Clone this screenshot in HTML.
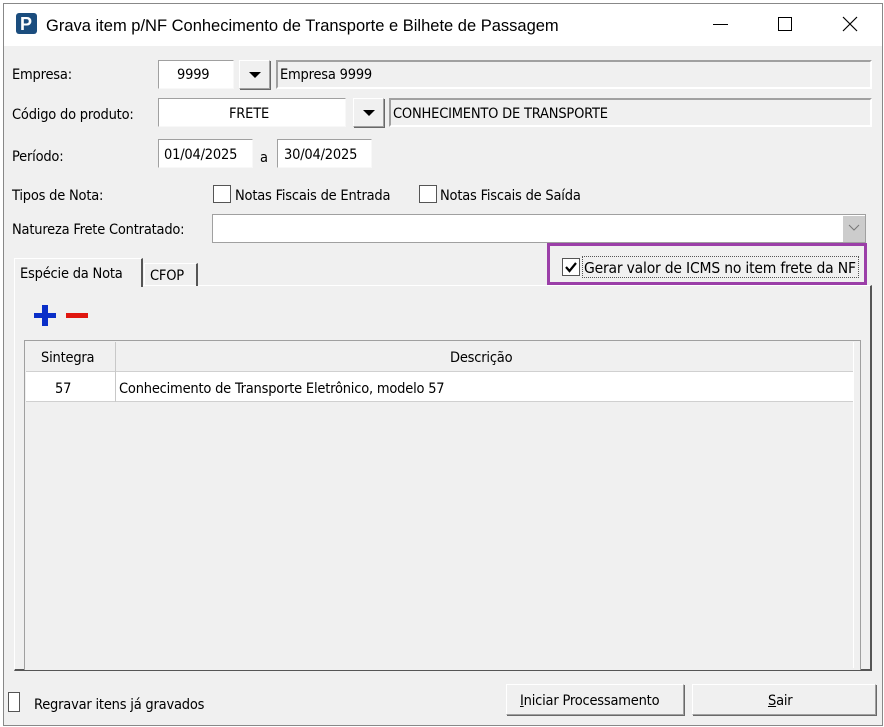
<!DOCTYPE html>
<html><head><meta charset="utf-8"><style>
body{margin:0;width:884px;height:727px;background:#fff;position:relative;overflow:hidden;font-family:Tahoma,"DejaVu Sans Condensed","Liberation Sans",sans-serif;font-size:14.5px;color:#000}
.a{position:absolute;box-sizing:border-box}
.t{position:absolute;white-space:nowrap;line-height:16px;letter-spacing:-0.2px;margin-top:2px}
.in{background:#fff;border-top:1px solid #a0a0a0;border-left:1px solid #a0a0a0;border-right:1px solid #f8f8f8;border-bottom:1px solid #f8f8f8}
.ro{background:#f0f0f0;border-top:2px solid #a0a0a0;border-left:2px solid #a0a0a0;border-right:2px solid #fff;border-bottom:2px solid #fff}
.btn{background:#f0f0f0;border-top:1px solid #fff;border-left:1px solid #fff;border-right:1px solid #a0a0a0;border-bottom:1px solid #a0a0a0;box-shadow:1px 1px 0 #696969}
.cb{background:#fff;border:1px solid #333}
.tri{position:absolute;width:0;height:0;border-left:6px solid transparent;border-right:6px solid transparent;border-top:6px solid #000}
</style></head><body>
<div class="a" style="border:1px solid #888;background:#f0f0f0;left:3px;top:3px;width:880px;height:723px"></div>
<div class="a" style="left:4px;top:4px;width:878px;height:42px;background:#fff"></div>
<div class="a" style="left:16px;top:13px;width:21px;height:21px;background:#1b4d7e;border-radius:3px"></div>
<div class="t" style="left:20px;top:12px;color:#fff;font-weight:bold;font-size:18px;line-height:20px;font-family:'Liberation Sans',sans-serif">P</div>
<div class="t" style="left:46px;top:15px;font-size:16.5px;line-height:18px;font-family:'Liberation Sans',sans-serif;letter-spacing:0">Grava item p/NF Conhecimento de Transporte e Bilhete de Passagem</div>
<div class="a" style="left:713px;top:24px;width:15px;height:1px;background:#000"></div>
<div class="a" style="left:778px;top:17px;width:14px;height:14px;border:1px solid #000"></div>
<svg class="a" style="left:842px;top:16px" width="16" height="16"><path d="M1 1L15 15M15 1L1 15" stroke="#000" stroke-width="1.2"/></svg>

<div class="t" style="left:12px;top:65px">Empresa:</div>
<div class="a in" style="left:158px;top:60px;width:76px;height:29px"></div>
<div class="t" style="left:177px;top:65px">9999</div>
<div class="a btn" style="left:239px;top:60px;width:31px;height:29px"></div>
<div class="tri" style="left:249px;top:72px"></div>
<div class="a ro" style="left:276px;top:60px;width:596px;height:29px"></div>
<div class="t" style="left:280px;top:65px">Empresa 9999</div>

<div class="t" style="left:12px;top:105px">Código do produto:</div>
<div class="a in" style="left:158px;top:98px;width:188px;height:29px"></div>
<div class="t" style="left:229px;top:104px">FRETE</div>
<div class="a btn" style="left:353px;top:98px;width:31px;height:29px"></div>
<div class="tri" style="left:363px;top:110px"></div>
<div class="a ro" style="left:389px;top:98px;width:483px;height:29px"></div>
<div class="t" style="left:393px;top:104px">CONHECIMENTO DE TRANSPORTE</div>

<div class="t" style="left:12px;top:147px">Período:</div>
<div class="a in" style="left:158px;top:139px;width:95px;height:29px"></div>
<div class="t" style="left:164px;top:145px">01/04/2025</div>
<div class="t" style="left:260px;top:148px">a</div>
<div class="a in" style="left:277px;top:139px;width:95px;height:29px"></div>
<div class="t" style="left:284px;top:145px">30/04/2025</div>

<div class="t" style="left:12px;top:186px">Tipos de Nota:</div>
<div class="a cb" style="left:213px;top:185px;width:18px;height:18px;border-color:#555"></div>
<div class="t" style="left:235px;top:186px">Notas Fiscais de Entrada</div>
<div class="a cb" style="left:419px;top:185px;width:18px;height:18px;border-color:#555"></div>
<div class="t" style="left:440px;top:186px">Notas Fiscais de Saída</div>

<div class="t" style="left:12px;top:220px">Natureza Frete Contratado:</div>
<div class="a in" style="left:212px;top:214px;width:654px;height:29px;border:1px solid #a0a0a0"></div>
<div class="a" style="left:843px;top:216px;width:22px;height:26px;background:#ccc"></div>
<svg class="a" style="left:848px;top:224px" width="12" height="8"><path d="M1 1L6 6L11 1" stroke="#777" fill="none"/></svg>

<div class="a" style="left:14px;top:285px;width:858px;height:386px;border-top:1px solid #fff;border-left:1px solid #fff;border-right:2px solid #555;border-bottom:2px solid #555"></div>
<div class="a" style="left:14px;top:258px;width:129px;height:29px;background:#f0f0f0;border-top:1px solid #fff;border-left:1px solid #fff;border-right:2px solid #555"></div>
<div class="t" style="left:20px;top:264px">Espécie da Nota</div>
<div class="a" style="left:144px;top:263px;width:54px;height:23px;border-left:1px solid #fff;border-top:1px solid #fff;border-right:2px solid #555"></div>
<div class="t" style="left:150px;top:266px">CFOP</div>

<div class="a" style="left:547px;top:243px;width:320px;height:42px;border:3px solid #9b3fa8"></div>
<div class="a cb" style="left:562px;top:258px;width:18px;height:18px;border-color:#555"></div>
<svg class="a" style="left:564px;top:260px" width="14" height="14"><path d="M2 7L5.5 11L12 3" stroke="#000" stroke-width="2.2" fill="none"/></svg>
<div class="a" style="left:582px;top:256px;width:277px;height:22px;border:1px dotted #555"></div>
<div class="t" style="left:584px;top:258px;font-size:15.5px">Gerar valor de ICMS no item frete da NF</div>

<div class="a" style="left:34px;top:313px;width:22px;height:5px;background:#0a2ec8"></div>
<div class="a" style="left:42px;top:305px;width:6px;height:21px;background:#0a2ec8"></div>
<div class="a" style="left:66px;top:313px;width:22px;height:5px;background:#e0160f"></div>

<div class="a" style="left:24px;top:340px;width:837px;height:330px;border:1px solid #a0a0a0;border-bottom:none;background:#f0f0f0"></div>
<div class="a" style="left:26px;top:342px;width:828px;height:30px;background:#f0f0f0;border-bottom:1px solid #d0d0d0"></div>
<div class="a" style="left:115px;top:342px;width:1px;height:60px;background:#c8c8c8"></div>
<div class="t" style="left:41px;top:348px">Sintegra</div>
<div class="t" style="left:450px;top:348px">Descrição</div>
<div class="a" style="left:26px;top:372px;width:828px;height:30px;background:#fff;border-bottom:1px solid #d0d0d0"></div>
<div class="a" style="left:115px;top:372px;width:1px;height:30px;background:#c8c8c8"></div>
<div class="t" style="left:55px;top:379px">57</div>
<div class="t" style="left:119px;top:379px">Conhecimento de Transporte Eletrônico, modelo 57</div>
<div class="a" style="left:853px;top:342px;width:1px;height:326px;background:#fff"></div>

<div class="a" style="left:8px;top:692px;width:12px;height:20px;background:#fff;border:1px solid #555"></div>
<div class="t" style="left:34px;top:695px">Regravar itens já gravados</div>
<div class="a btn" style="left:506px;top:684px;width:178px;height:31px"></div>
<div class="t" style="left:520px;top:691px"><u>I</u>niciar Processamento</div>
<div class="a btn" style="left:692px;top:684px;width:184px;height:31px"></div>
<div class="t" style="left:768px;top:691px"><u>S</u>air</div>
</body></html>
